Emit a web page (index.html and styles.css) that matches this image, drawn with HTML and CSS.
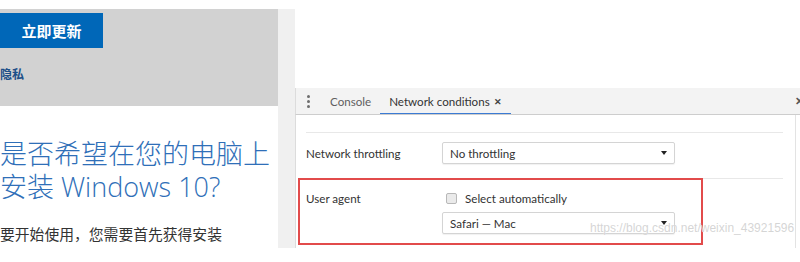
FILE: index.html
```html
<!DOCTYPE html>
<html lang="zh-CN">
<head>
<meta charset="utf-8">
<title>Network conditions</title>
<link rel="stylesheet" href="styles.css">
</head>
<body>
<div class="page">
  <div class="left">
    <div class="banner">
      <div class="btn">立即更新</div>
      <div class="privacy">隐私</div>
    </div>
    <div class="content">
      <h1 class="title"><span class="line">是否希望在您的电脑上</span><span class="line">安装 Windows 10?</span></h1>
      <p class="para">要开始使用，您需要首先获得安装</p>
    </div>
  </div>
  <div class="strip"></div>
  <div class="devtools">
    <div class="dt-top"></div>
    <div class="tabbar">
      <div class="dots"><span></span><span></span><span></span></div>
      <div class="tab">Console</div>
      <div class="tab active">Network conditions <span class="tab-x">✕</span></div>
      <div class="close">✕</div>
    </div>
    <div class="dt-body">
      <div class="row row-throttle">
        <div class="label">Network throttling</div>
        <div class="control">
          <div class="select"><span>No throttling</span><i class="arrow"></i></div>
        </div>
      </div>
      <div class="row row-ua">
        <div class="label">User agent</div>
        <div class="control">
          <div class="check-line"><span class="checkbox"></span><span>Select automatically</span></div>
          <div class="select"><span>Safari — Mac</span><i class="arrow"></i></div>
        </div>
      </div>
    </div>
    <div class="highlight"></div>
    <div class="watermark">https://blog.csdn.net/weixin_43921596</div>
  </div>
</div>
</body>
</html>
```
FILE: styles.css
```css
html, body {
  margin: 0;
  padding: 0;
  background: #fff;
}
body {
  font-family: "Lato", "Noto Sans CJK SC", sans-serif;
  color: #333;
}
.page {
  display: flex;
  width: 800px;
  height: 248px;
  overflow: hidden;
}
.left {
  width: 278px;
  padding-top: 9px;
  display: flex;
  flex-direction: column;
}
.banner {
  background: #d2d2d2;
  height: 97px;
  padding-top: 4px;
  box-sizing: border-box;
}
.btn {
  width: 103px;
  height: 35px;
  background: #0067b8;
  color: #fff;
  font: bold 15px "Noto Sans CJK SC", sans-serif;
  display: flex;
  align-items: center;
  justify-content: center;
}
.privacy {
  margin-top: 19px;
  font: bold 12px/14px "Noto Sans CJK SC", sans-serif;
  color: #1d4f88;
}
.content {
  flex: 1;
  padding-top: 31px;
  background: #fff;
}
.title {
  margin: 0;
  font-family: "Open Sans", "Noto Sans CJK SC", sans-serif;
  font-weight: 300;
  font-size: 27px;
  line-height: 33px;
  color: #2f6fb8;
  white-space: nowrap;
}
.title .line {
  display: block;
  height: 33px;
}
.para {
  margin: 21px 0 0;
  font: 14.8px/20px "Noto Sans CJK SC", sans-serif;
  color: #333;
  white-space: nowrap;
}
.strip {
  width: 17px;
  margin-top: 9px;
  background: #f0f0f0;
}
.devtools {
  flex: 1;
  position: relative;
  display: flex;
  flex-direction: column;
}
.dt-top {
  height: 88px;
}
.tabbar {
  height: 26px;
  background: #f3f3f3;
  border-bottom: 1px solid #cdcdcd;
  border-left: 1px solid #dcdcdc;
  display: flex;
  align-items: stretch;
  font-size: 11.6px;
  overflow: hidden;
}
.dots {
  width: 25px;
  display: flex;
  flex-direction: column;
  align-items: center;
  justify-content: center;
  gap: 2px;
}
.dots span {
  width: 3px;
  height: 3px;
  border-radius: 50%;
  background: #6e6e6e;
}
.tab {
  padding: 0 9px;
  display: flex;
  align-items: center;
  color: #5f5f5f;
  position: relative;
}
.tab.active {
  color: #333;
}
.tab.active::after {
  content: "";
  position: absolute;
  left: 0;
  right: 0;
  bottom: -1px;
  height: 2px;
  background: #3b7bd4;
}
.tab-x {
  margin-left: 4px;
  font-size: 9px;
  font-weight: bold;
  color: #444;
}
.close {
  margin-left: auto;
  width: 5px;
  overflow: hidden;
  display: flex;
  align-items: center;
  font-size: 11px;
  font-weight: bold;
  color: #555;
}
.dt-body {
  flex: 1;
  border-left: 1px solid #dcdcdc;
  border-right: 1px solid #e3e3e3;
  margin-right: 4px;
  padding: 17px 12px 0 10px;
}
.row {
  display: flex;
  border-top: 1px solid #e8e8e8;
  font-size: 11.6px;
}
.row-throttle {
  padding: 9px 0 14px;
  align-items: center;
}
.row-ua {
  padding: 9px 0 0;
  align-items: flex-start;
}
.label {
  width: 136px;
  color: #333;
}
.row-ua .label {
  line-height: 20px;
  padding-top: 1px;
}
.control {
  display: flex;
  flex-direction: column;
  gap: 4px;
}
.check-line {
  height: 20px;
  display: flex;
  align-items: center;
  gap: 8px;
  padding-left: 4px;
}
.checkbox {
  width: 9px;
  height: 9px;
  border: 1px solid #b8b8b8;
  border-radius: 2px;
  background: #eaeaea;
}
.select {
  width: 233px;
  height: 22px;
  box-sizing: border-box;
  border: 1px solid #d4d4d4;
  border-radius: 2px;
  box-shadow: 0 1px 1px rgba(0, 0, 0, 0.06);
  padding: 0 7px;
  display: flex;
  align-items: center;
  justify-content: space-between;
  background: #fff;
  color: #333;
}
.arrow {
  width: 0;
  height: 0;
  border-left: 3px solid transparent;
  border-right: 3px solid transparent;
  border-top: 4px solid #222;
}
.highlight {
  position: absolute;
  left: 3px;
  top: 178px;
  width: 401px;
  height: 63px;
  border: 2px solid #e24b4b;
  pointer-events: none;
}
.watermark {
  position: absolute;
  left: 295px;
  top: 221px;
  font: 12px "Liberation Sans", sans-serif;
  color: rgba(200, 200, 200, 0.75);
  text-shadow: 0 0 1px #fff;
  white-space: nowrap;
}
```
